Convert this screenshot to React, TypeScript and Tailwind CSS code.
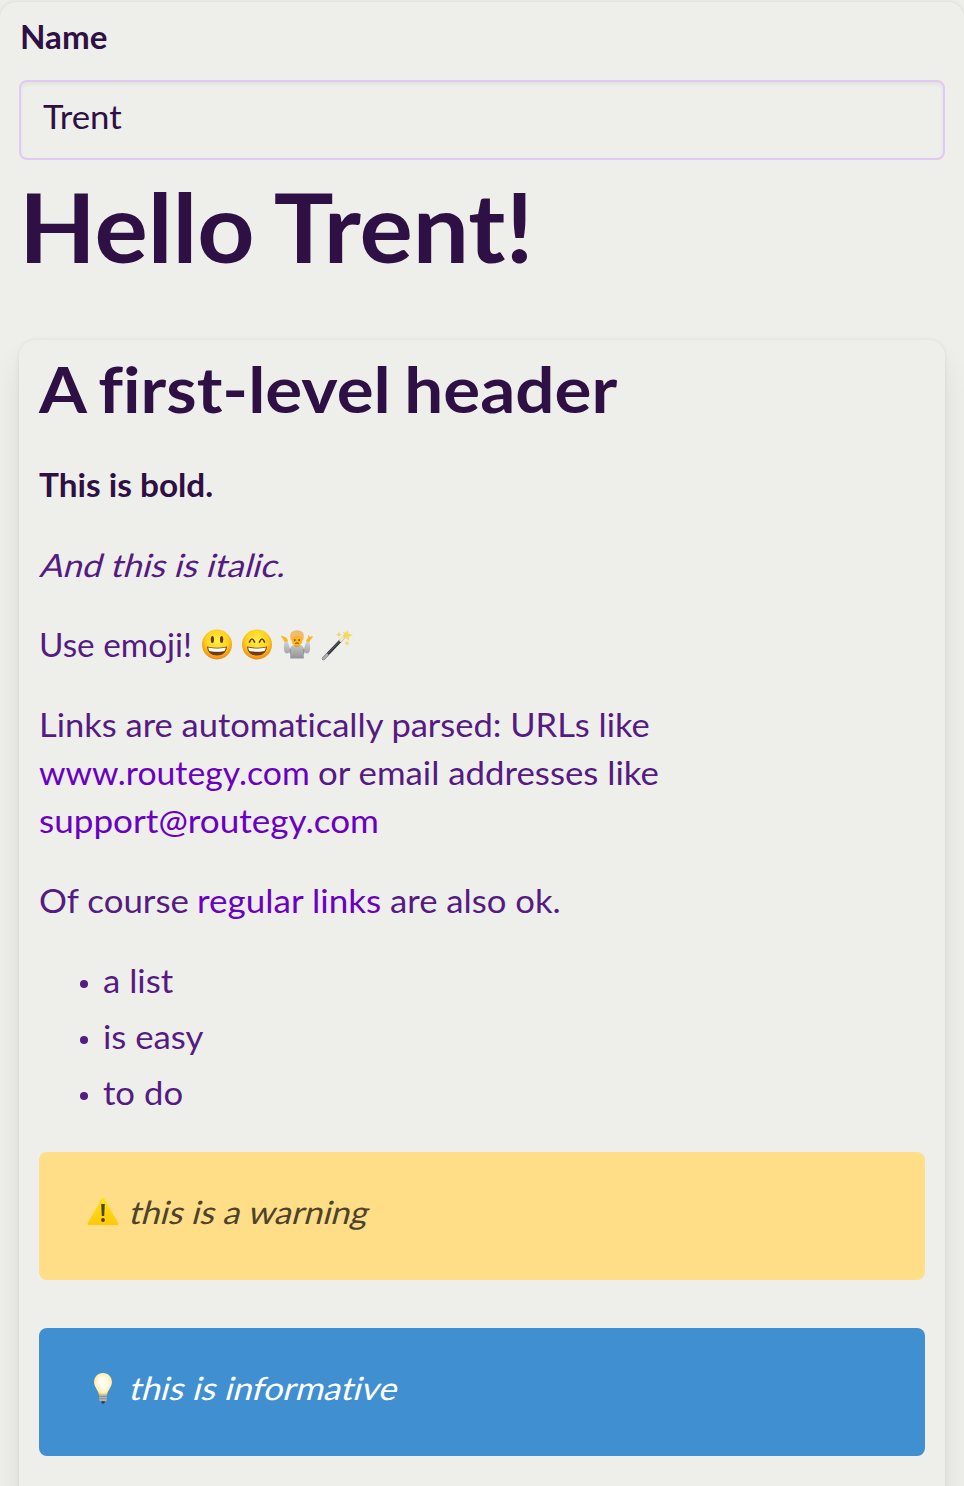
import React from "react";

function Smile({ happy }: { happy?: boolean }) {
  const id = happy ? "grin" : "smile";
  return (
    <svg viewBox="0 0 32 32" className="size-8 shrink-0">
      <defs>
        <radialGradient id={id} cx="50%" cy="38%" r="62%">
          <stop offset="0" stopColor="#fff04a" />
          <stop offset="0.6" stopColor="#ffd21f" />
          <stop offset="1" stopColor="#f08410" />
        </radialGradient>
      </defs>
      <circle cx="16" cy="15.500" r="15" fill={`url(#${id})`} />
      {happy ? (
        <path d="M8.5 13q2.500-6 5 0M18.500 13q2.500-6 5 0" fill="none" stroke="#6b3408" strokeWidth="1.700" strokeLinecap="round" />
      ) : (
        <g fill="#6b3408">
          <ellipse cx="11.400" cy="10.500" rx="1.600" ry="3.500" />
          <ellipse cx="20.600" cy="10.500" rx="1.600" ry="3.500" />
        </g>
      )}
      <path d="M6 17.500Q16 20 26 17.500Q25.500 26.500 16 26.500T6 17.500Z" fill="#713a12" />
      <path d="M7.200 18.500Q16 20.500 24.800 18.500Q24.500 22 22.500 22.300Q16 23.300 9.500 22.300Q7.500 22 7.200 18.500Z" fill="#fff" />
    </svg>
  );
}

function Shrug() {
  return (
    <svg viewBox="0 0 32 32" className="size-8 shrink-0">
      <defs>
        <linearGradient id="shirt" x1="0" y1="0" x2="0" y2="1">
          <stop offset="0" stopColor="#d2d3d5" />
          <stop offset="1" stopColor="#929396" />
        </linearGradient>
      </defs>
      <path d="M3.500 13L6.500 12L9 19.500Q10.500 16 13 16H19Q21.500 16 23 19.500L25.500 12L28.500 13Q30 21 28 23.500Q26 25.500 22.800 23V29.500H9.200V23Q6 25.500 4 23.500Q2 21 3.500 13Z" fill="url(#shirt)" />
      <path d="M9.300 20V25M22.700 20V25" stroke="#808184" strokeWidth="0.700" />
      <path d="M0 7.500Q.500 6 3 7.800Q6.500 8.500 7 12L3.700 13.200Q3 10.500 0 7.500ZM32 8Q31.500 6.500 29 8L27.500 6Q26.500 6.500 27.500 8.800Q25.500 9.500 25 12L28.300 13.200Q29 10.500 32 8Z" fill="#ffb31a" />
      <path d="M13 13.500H19V16.500Q16 19.500 13 16.500Z" fill="#e79911" />
      <path d="M9.700 11Q8 4 11.500 2.500Q16 0 20.500 2.500Q24 4 22.300 11Z" fill="#efbb70" />
      <path d="M10.800 8.500Q14.500 8 17 6.500Q18.500 8 21.200 8.500Q22 12 20.500 14.500Q18.500 17 16 17T11.500 14.500Q10 12 10.800 8.500Z" fill="#ffb41a" />
      <circle cx="13.800" cy="11" r="0.850" fill="#54311a" />
      <circle cx="18.200" cy="11" r="0.850" fill="#54311a" />
      <path d="M14.200 14.500Q16 13.300 17.800 14.500" stroke="#8b3d16" fill="none" />
    </svg>
  );
}

function Wand() {
  return (
    <svg viewBox="0 0 32 32" className="size-8 shrink-0">
      <path d="M2.500 29.500L23 8" stroke="#35373b" strokeWidth="3.200" strokeLinecap="round" />
      <path d="M2.500 29.500L6 25.800" stroke="#a9aaad" strokeWidth="3" strokeLinecap="round" />
      <path d="M19.800 11.200L22.800 8" stroke="#f3e9d5" strokeWidth="3.300" strokeLinecap="round" />
      <path d="M7 24L19 11.500" stroke="#77797e" strokeWidth="0.700" />
      <path d="M26.500 1L27.700 4.800L32 6L28 7.800L28 12L25.200 9L21.500 9.500L23.700 6L21.500 2.500L25 3.700Z" fill="#f5d95c" />
      <path d="M18 2.500L18.800 4.500L21 5.500L18.800 6.500L18 8.500L17 6.500L15 5.500L17 4.500ZM26 11.500L27 13.500L29 14L27 15L26 17L25 15L23 14L25 13.500Z" fill="#f2d96c" />
    </svg>
  );
}

function Warning() {
  return (
    <svg viewBox="0 0 32 32" className="size-8 shrink-0">
      <defs>
        <linearGradient id="sign" x1="0" y1="0" x2="0" y2="1">
          <stop offset="0" stopColor="#ffe01a" />
          <stop offset="1" stopColor="#ffc90a" />
        </linearGradient>
      </defs>
      <path d="M14.900 2.300Q16 .700 17.100 2.300L31.300 27.300Q32 29 30.500 29H1.500Q0 29 .7 27.300Z" fill="url(#sign)" />
      <path d="M14.200 8H17.800L17.200 20H14.800Z" fill="#4e4616" />
      <circle cx="16" cy="24" r="1.900" fill="#4e4616" />
    </svg>
  );
}

function Bulb() {
  return (
    <svg viewBox="0 0 32 32" className="size-8 shrink-0">
      <defs>
        <radialGradient id="glass" cx="50%" cy="45%" r="58%">
          <stop offset="0.350" stopColor="#fffdf2" />
          <stop offset="0.750" stopColor="#fff0b5" />
          <stop offset="1" stopColor="#f2c64d" />
        </radialGradient>
      </defs>
      <path d="M16 1C10.500 1 7 5 7 10C7 15 11 17.500 12 23H20C21 17.500 25 15 25 10C25 5 21.500 1 16 1Z" fill="url(#glass)" />
      <path d="M12.200 22.500H19.800V28Q19.500 29.500 16 29.500T12.200 28Z" fill="#b2b3b5" />
      <path d="M12.200 24.500H19.800M12.200 26.700H19.800" stroke="#838487" strokeWidth="0.700" />
      <path d="M14 29.300H18L17 31.500H15Z" fill="#35373a" />
    </svg>
  );
}

const items = ["a list", "is easy", "to do"];

export default function App() {
  return (
    <div className="h-[1486px] overflow-hidden bg-[#eeefea] pt-0.5 font-['Lato',sans-serif] text-[32px] leading-[48px] text-[#551a83] [font-variant-ligatures:none]">
      <main className="h-[1600px] rounded-[16px] bg-[#eeefea] px-[19px] pt-[11px] shadow-[0_0_4px_rgba(0,0,0,0.1)]">
        <label className="block origin-left scale-x-[1.035] pl-px font-bold text-[#2f1044]">Name</label>
        <div className="mt-[19px] h-20 rounded-lg border-2 border-[#e0caf2] pt-[11px] pl-[22px] text-[#2f1044] shadow-[inset_0_2px_4px_rgba(0,0,0,0.06)]">
          <span className="inline-block origin-left scale-x-[1.088]">Trent</span>
        </div>
        <h1 className="mt-[18px] origin-left scale-x-[1.04] text-[96px] leading-[96px] font-bold [word-spacing:-2px] whitespace-nowrap text-[#2f1044]">Hello Trent!</h1>
        <section className="mt-[66px] h-[1300px] rounded-[16px] bg-[#eeefea] px-5 pt-[17px] shadow-[0_0_4px_rgba(0,0,0,0.08),0_20px_30px_rgba(0,0,0,0.08)]">
          <h2 className="origin-left scale-x-[1.08] text-[64px] leading-[64px] font-bold [word-spacing:-3px] whitespace-nowrap text-[#2f1044]">A first-level header</h2>
          <p className="mt-10 origin-left scale-x-[1.042] font-bold text-[#2f1044]">This is bold.</p>
          <p className="mt-8 pl-[3px]"><span className="inline-block origin-left scale-x-[1.079] -skew-x-[14deg]">And this is italic.</span></p>
          <div className="mt-8 flex h-12">
            <span className="w-[162px] origin-left scale-x-[1.04] whitespace-nowrap">Use emoji!</span>
            <span className="flex gap-2 pt-2"><Smile /><Smile happy /><Shrug /><Wand /></span>
          </div>
          <div className="mt-8 whitespace-nowrap">
            <p className="origin-left scale-x-[1.078]">Links are automatically parsed: URLs like</p>
            <p className="flex">
              <a className="w-[279px] origin-left scale-x-[1.055] text-[#6b00c2]">www.routegy.com</a>
              <span className="origin-left scale-x-[1.087]">or email addresses like</span>
            </p>
            <p><a className="inline-block origin-left scale-x-[1.097] text-[#6b00c2]">support@routegy.com</a></p>
          </div>
          <p className="mt-8 flex whitespace-nowrap">
            <span className="w-[158px] origin-left scale-x-[1.09]">Of course</span>
            <a className="w-[193px] origin-left scale-x-[1.095] text-[#6b00c2]">regular links</a>
            <span className="origin-left scale-x-[1.083]">are also ok.</span>
          </p>
          <ul className="mt-8 flex flex-col gap-2">
            {items.map((item) => (
              <li key={item} className="flex items-center pl-[41px]">
                <span className="mt-1.5 mr-[15px] size-2 rounded-full bg-[#551a83]" />
                <span className="origin-left scale-x-[1.085]">{item}</span>
              </li>
            ))}
          </ul>
          <div className="mt-[35px] flex h-32 rounded-lg bg-[#ffde87] pt-9 pl-12 text-[#4c432d]">
            <span className="mr-3 pt-2"><Warning /></span>
            <span className="origin-left scale-x-[1.062] -skew-x-[14deg] self-start">this is a warning</span>
          </div>
          <div className="mt-12 flex h-32 rounded-lg bg-[#408fd1] pt-9 pl-12 text-white">
            <span className="mr-3 pt-2"><Bulb /></span>
            <span className="origin-left scale-x-[1.077] -skew-x-[14deg] self-start">this is informative</span>
          </div>
        </section>
      </main>
    </div>
  );
}
